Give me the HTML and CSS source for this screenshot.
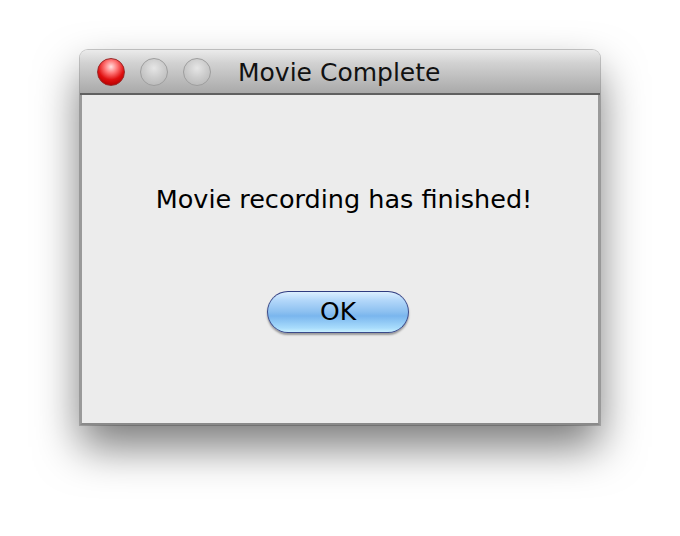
FILE: index.html
```html
<!DOCTYPE html>
<html>
<head>
<meta charset="utf-8">
<link rel="stylesheet" href="styles.css">
</head>
<body>
<div class="window">
  <div class="titlebar">
    <div class="lights">
      <span class="light close"></span>
      <span class="light off"></span>
      <span class="light off"></span>
    </div>
    <div class="title">Movie Complete</div>
  </div>
  <div class="content">
    <p class="message">Movie recording has finished!</p>
    <button class="ok">OK</button>
  </div>
</div>
</body>
</html>
```
FILE: styles.css
```css
html, body {
  margin: 0;
  padding: 0;
  background: #ffffff;
}
body {
  width: 680px;
  height: 536px;
  overflow: hidden;
  font-family: "DejaVu Sans", "Verdana", sans-serif;
}
.window {
  margin: 50px 0 0 80px;
  width: 520px;
  height: 375px;
  display: flex;
  flex-direction: column;
  border-radius: 8px 8px 0 0;
  box-shadow: 0 22px 44px rgba(0,0,0,0.52), 0 0 0 1px rgba(0,0,0,0.2);
  background: #ececec;
}
.titlebar {
  height: 43px;
  border-radius: 8px 8px 0 0;
  background: linear-gradient(#ebebeb, #d2d2d2 30%, #a9a9a9);
  border-bottom: 2px solid #606060;
  display: flex;
  align-items: center;
}
.lights {
  display: flex;
  gap: 15px;
  margin-left: 17px;
}
.light {
  width: 28px;
  height: 28px;
  border-radius: 50%;
  box-sizing: border-box;
}
.close {
  background: radial-gradient(circle at 50% 30%, #ffe0e0 0, #ff7878 28%, #e01010 58%, #b80000 82%, #ff6060 100%);
  border: 1px solid #9a2a2a;
}
.off {
  background: radial-gradient(circle at 50% 35%, #e6e6e6 0, #cdcdcd 45%, #bcbcbc 80%, #d8d8d8 100%);
  border: 1px solid #9e9e9e;
}
.title {
  margin-left: 27px;
  margin-top: 2px;
  font-size: 25px;
  color: #111;
}
.content {
  flex: 1;
  display: flex;
  flex-direction: column;
  align-items: center;
  border-left: 2px solid #9a9a9a;
  border-right: 2px solid #9a9a9a;
  border-bottom: 2px solid #8a8a8a;
}
.message {
  margin: 89px 0 0 8px;
  font-size: 25.5px;
  line-height: 30px;
  color: #000;
}
.ok {
  margin: 77px 0 0 -4px;
  width: 142px;
  height: 42px;
  border-radius: 21px;
  border: 1px solid #3a4a8a;
  border-top-color: #303c80;
  background: linear-gradient(#dcefff 0, #b4d8fa 20%, #8cc0f0 50%, #7ab6ee 60%, #a8dcfc 90%, #c8f0ff 100%);
  box-shadow: 0 2px 2px rgba(0,0,0,0.35);
  font-family: "DejaVu Sans", sans-serif;
  font-size: 25px;
  line-height: 40px;
  color: #000;
  padding: 0;
}
```
